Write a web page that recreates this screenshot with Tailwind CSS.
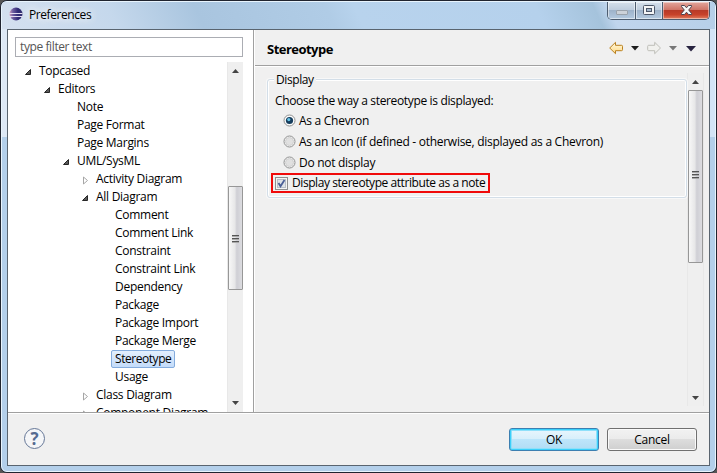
<!DOCTYPE html>
<html lang="en">
<head>
<meta charset="utf-8">
<title>Preferences</title>
<script src="https://cdn.jsdelivr.net/npm/@tailwindcss/browser@4"></script>
</head>
<body class="w-[717px] h-[473px] overflow-hidden bg-[#555] text-black text-[12px] leading-[18px] font-['Open_Sans','Noto_Sans',sans-serif] tracking-[-0.28px] whitespace-nowrap">
<div class="w-[717px] h-[473px] rounded-[7px] border border-[#20242f] bg-[#b3cfea] overflow-hidden">
<div class="w-full h-full rounded-[6px] border border-[#e8f4fd] flex flex-col bg-[linear-gradient(90deg,#dde8f5_0,#dde8f5_50%,#d3e4f6_50%,#d3e4f6_100%)] bg-[length:100%_135px] bg-no-repeat">
  <header class="h-[27px] shrink-0 flex items-start bg-[linear-gradient(65deg,#d4e0ef_0,#c5d8ec_16%,#a9c5df_28%,#b0cce6_46%,#b8d3ed_50%,#b5d1ec_75%,#a5c3dc_83%,#c0d5ed_85%,#b6cfe8_100%)]">
    <svg class="ml-[7px] mt-[5px] shrink-0" width="14" height="14" viewBox="0 0 14 14"><defs><linearGradient id="ecl" x2="1"><stop offset="0" stop-color="#d0a0bd"/><stop offset=".25" stop-color="#6f5ea0"/><stop offset=".65" stop-color="#302a76"/><stop offset="1" stop-color="#34306f"/></linearGradient></defs><circle cx="7" cy="7" r="6.5" fill="url(#ecl)"/><path d="M.5 6.500h13M.5 9.500h13" stroke="#e5ddf1"/></svg>
    <div class="ml-[6px] mt-[4px] grow tracking-[-0.42px] [text-shadow:0_0_8px_white,0_0_10px_white]">Preferences</div>
    <div class="flex h-[18px] w-[103px] mr-[5px] rounded-b-[5px] border border-t-0 border-[#4d5d70] overflow-hidden">
      <div class="w-[28px] border-r border-[#4d5d70] bg-[linear-gradient(#d5e0eb_0,#bccbdc_50%,#9eb3ca_50%,#b4cae0)] shadow-[inset_0_0_0_1px_#ffffff80]"><div class="ml-[8px] mt-[8px] w-[12px] h-[5px] rounded-[1px] border border-[#9aa2ab] bg-[#ccd2d9]"></div></div>
      <div class="w-[27px] border-r border-[#4d5d70] bg-[linear-gradient(#d5e0eb_0,#bccbdc_50%,#9eb3ca_50%,#b4cae0)] shadow-[inset_0_0_0_1px_#ffffff80]"><svg class="ml-[7px] mt-[3px]" width="12" height="10" viewBox="0 0 12 10"><rect x=".5" y=".5" width="11" height="9" rx="1" fill="#f4f5f6" stroke="#4c5668"/><rect x="3.5" y="3.5" width="5" height="3" fill="#a5b8cc" stroke="#4c5668"/></svg></div>
      <div class="grow bg-[linear-gradient(#e3a79d_0,#ce7264_48%,#b83a27_50%,#c8422a_75%,#e28061_100%)] shadow-[inset_0_0_0_1px_#ffffff70]"><svg class="ml-[17px] mt-[2px]" width="13" height="12" viewBox="0 0 13 12"><path d="M1.500 1.500h3l2 2.300 2-2.300h3v1.100L8.700 6l2.800 3.400v1.100h-3L6.500 8.200l-2 2.300h-3V9.400L4.300 6 1.500 2.600z" fill="#f7f7f7" stroke="#4b4450"/></svg></div>
    </div>
  </header>
  <main class="ml-[5px] w-[703px] h-[437px] shrink-0 border border-[#59646f] bg-[#f0f0f0] flex flex-col">
    <div class="h-[383px] shrink-0 flex border-b border-[#a0a0a0]">
      <aside class="w-[246px] shrink-0 bg-white border-r border-[#a0a0a0] flex flex-col pl-[7px] pt-[7px]">
        <div class="w-[228px] h-[20px] shrink-0 border border-[#abadb3] pl-[4px] text-[#555] tracking-[-0.4px]">type filter text</div>
        <div class="mt-[5px] h-[350px] flex overflow-hidden">
          <ul class="w-[212px] shrink-0 overflow-hidden">
            <li class="h-[18px] flex items-center pl-[9px]"><svg width="8" height="8" class="mr-[7px] mt-[2px]"><path d="M6.500 1.500v5h-5z" fill="#595959" stroke="#262626"/></svg><span>Topcased</span></li>
            <li class="h-[18px] flex items-center pl-[28px]"><svg width="8" height="8" class="mr-[7px] mt-[2px]"><path d="M6.500 1.500v5h-5z" fill="#595959" stroke="#262626"/></svg><span>Editors</span></li>
            <li class="h-[18px] pl-[62px]"><span>Note</span></li>
            <li class="h-[18px] pl-[62px]"><span>Page Format</span></li>
            <li class="h-[18px] pl-[62px]"><span>Page Margins</span></li>
            <li class="h-[18px] flex items-center pl-[47px]"><svg width="8" height="8" class="mr-[7px] mt-[2px]"><path d="M6.500 1.500v5h-5z" fill="#595959" stroke="#262626"/></svg><span>UML/SysML</span></li>
            <li class="h-[18px] flex items-center pl-[67px]"><svg width="8" height="9" class="mr-[6px] mt-[3px]"><path d="M1.500 1v7l4-3.500z" fill="#fff" stroke="#a6a6a6"/></svg><span>Activity Diagram</span></li>
            <li class="h-[18px] flex items-center pl-[66px]"><svg width="8" height="8" class="mr-[7px] mt-[2px]"><path d="M6.500 1.500v5h-5z" fill="#595959" stroke="#262626"/></svg><span>All Diagram</span></li>
            <li class="h-[18px] pl-[100px]"><span>Comment</span></li>
            <li class="h-[18px] pl-[100px]"><span>Comment Link</span></li>
            <li class="h-[18px] pl-[100px]"><span>Constraint</span></li>
            <li class="h-[18px] pl-[100px]"><span>Constraint Link</span></li>
            <li class="h-[18px] pl-[100px]"><span>Dependency</span></li>
            <li class="h-[18px] pl-[100px]"><span>Package</span></li>
            <li class="h-[18px] pl-[100px]"><span>Package Import</span></li>
            <li class="h-[18px] pl-[100px]"><span>Package Merge</span></li>
            <li class="h-[18px] pl-[96px]"><div class="w-[64px] h-[18px] leading-[16px] pl-[3px] border border-[#84acdd] rounded-[2px] bg-linear-to-b from-[#e3effd] to-[#c4dcfa] tracking-[-0.45px]"><span>Stereotype</span></div></li>
            <li class="h-[18px] pl-[100px]"><span>Usage</span></li>
            <li class="h-[18px] flex items-center pl-[67px]"><svg width="8" height="9" class="mr-[6px] mt-[3px]"><path d="M1.500 1v7l4-3.500z" fill="#fff" stroke="#a6a6a6"/></svg><span>Class Diagram</span></li>
            <li class="h-[18px] flex items-center pl-[67px]"><svg width="8" height="9" class="mr-[6px] mt-[3px]"><path d="M1.500 1v7l4-3.500z" fill="#fff" stroke="#a6a6a6"/></svg><span>Component Diagram</span></li>
          </ul>
          <div class="w-[16px] bg-[#efefef] border-l border-[#e8e8e8] flex flex-col items-center">
            <svg class="mt-[7px] shrink-0" width="7" height="4"><path d="M0 4L3.500 0 7 4z" fill="#444"/></svg>
            <div class="mt-[113px] mb-auto w-[15px] h-[104px] shrink-0 rounded-[1px] border border-[#979797] bg-[linear-gradient(90deg,#f7f7f7,#e7e7e8_45%,#cfcfd5_60%,#dcdce0)] flex items-center justify-center"><svg width="7" height="9"><path d="M0 1.500h7M0 4.500h7M0 7.500h7" stroke="#555"/><path d="M0 2.500h7M0 5.500h7M0 8.500h7" stroke="#aaa"/></svg></div>
            <svg class="mb-[7px] shrink-0" width="7" height="4"><path d="M0 0h7L3.500 4z" fill="#444"/></svg>
          </div>
        </div>
      </aside>
      <section class="w-[455px] shrink-0 flex flex-col border-l border-white">
        <div class="h-[36px] shrink-0 border-b border-[#a0a0a0] flex items-center">
          <h1 class="ml-[12px] mt-[3px] w-[342px] text-[13px] font-bold tracking-[-0.52px]">Stereotype</h1>
          <svg width="90" height="14" viewBox="0 0 90 14">
            <defs><linearGradient id="gold" x2="0" y2="1"><stop stop-color="#fffbe5"/><stop offset="1" stop-color="#ffd880"/></linearGradient></defs>
            <path d="M.7 7L6.500 1.300v3h6q1 0 1 1v3.400q0 1-1 1h-6v3z" fill="url(#gold)" stroke="#b98020" stroke-linejoin="round"/>
            <path d="M22 5h8l-4 4.500z" fill="#1d1d1d"/>
            <path d="M51.500 7L45.700 1.300v3h-6q-1 0-1 1v3.400q0 1 1 1h6v3z" fill="#f1f1ee" stroke="#bebeb8" stroke-linejoin="round"/>
            <path d="M60 5h8l-4 4.500z" fill="#777"/>
            <path d="M77 5h10l-5 5.500z" fill="#27233f"/>
          </svg>
        </div>
        <div class="grow flex pl-[12px] border-t border-white">
          <div class="relative mt-[12px] w-[420px] h-[119px] border border-[#d3dee8] rounded-[3px] shadow-[inset_0_0_0_1px_#fff,0_0_0_1px_#f8f8f8] shrink-0">
            <div class="absolute left-[6px] top-[-9px] px-[2px] bg-[#f0f0f0] tracking-[-0.4px]"><span>Display</span></div>
            <div class="mt-[12px] ml-[7px] tracking-[-0.35px]"><span>Choose the way a stereotype is displayed:</span></div>
            <div class="h-[21px] ml-[15px] flex items-center"><svg width="13" height="13" class="mr-[3px]"><circle cx="6.500" cy="6.500" r="5.500" fill="#fafafa" stroke="#8e8f8f"/><circle cx="6.500" cy="6.500" r="3.600" fill="#163d5d"/><circle cx="5.800" cy="5.600" r="1.600" fill="#67c6e8"/></svg><span>As a Chevron</span></div>
            <div class="h-[21px] ml-[15px] flex items-center"><svg width="13" height="13" class="mr-[3px]"><circle cx="6.500" cy="6.500" r="5.500" fill="#f7f7f7" stroke="#8e8f8f"/><circle cx="6.500" cy="6.500" r="4" fill="#e0e0e0" stroke="#d0d0d0"/></svg><span>As an Icon (if defined - otherwise, displayed as a Chevron)</span></div>
            <div class="h-[21px] ml-[15px] flex items-center"><svg width="13" height="13" class="mr-[3px]"><circle cx="6.500" cy="6.500" r="5.500" fill="#f7f7f7" stroke="#8e8f8f"/><circle cx="6.500" cy="6.500" r="4" fill="#e0e0e0" stroke="#d0d0d0"/></svg><span>Do not display</span></div>
            <div class="ml-[3px] w-[219px] h-[20px] border-2 border-[#f00a0a] flex items-center pl-[2px] tracking-[-0.43px]"><svg width="13" height="13" class="mr-[4px]"><rect x=".5" y=".5" width="12" height="12" fill="#f4f4f4" stroke="#8e8f8f"/><rect x="2.500" y="2.500" width="8" height="8" fill="#dfe3e7" stroke="#b8bfc7"/><path d="M3.500 6l2 3.300L9.500 3" fill="none" stroke="#4a5f97" stroke-width="1.800"/></svg><span>Display stereotype attribute as a note</span></div>
          </div>
          <div class="mt-[6px] w-[17px] h-[333px] bg-[#efefef] border-x border-[#e8e8e8] flex flex-col items-center">
            <svg class="mt-[7px] shrink-0" width="7" height="4"><path d="M0 4L3.500 0 7 4z" fill="#444"/></svg>
            <div class="mt-[6px] mb-auto w-[15px] h-[173px] shrink-0 rounded-[1px] border border-[#979797] bg-[linear-gradient(90deg,#f7f7f7,#e7e7e8_45%,#cfcfd5_60%,#dcdce0)] flex items-center justify-center"><svg width="7" height="9" class="mb-[4px]"><path d="M0 1.500h7M0 4.500h7M0 7.500h7" stroke="#555"/><path d="M0 2.500h7M0 5.500h7M0 8.500h7" stroke="#aaa"/></svg></div>
            <svg class="mb-[6px] shrink-0" width="7" height="4"><path d="M0 0h7L3.500 4z" fill="#444"/></svg>
          </div>
        </div>
      </section>
    </div>
    <footer class="grow flex items-start border-t border-white pt-[14px] pl-[16px]">
      <div class="w-[21px] h-[21px] rounded-full border-[1.5px] border-[#657797] bg-[#f5f6f8] flex items-center justify-center text-[17px] leading-[19px] font-bold text-[#566b91]">?</div>
      <button class="ml-[464px] w-[90px] h-[23px] rounded-[3px] border border-[#3c7fb1] shadow-[inset_0_0_0_1px_#3bd0fa,inset_0_0_0_2px_#8fe0fa] bg-[linear-gradient(#e9f6fd,#d7effb_48%,#bde5fa_50%,#b0dcf4)] leading-[20px]"><span>OK</span></button>
      <button class="ml-[8px] w-[90px] h-[23px] rounded-[3px] border border-[#707070] shadow-[inset_0_0_0_1px_#fafafa] bg-[linear-gradient(#f2f2f2,#ebebeb_48%,#dddddd_50%,#cfcfcf)] leading-[20px]"><span>Cancel</span></button>
    </footer>
  </main>
</div>
</div>
</body>
</html>
